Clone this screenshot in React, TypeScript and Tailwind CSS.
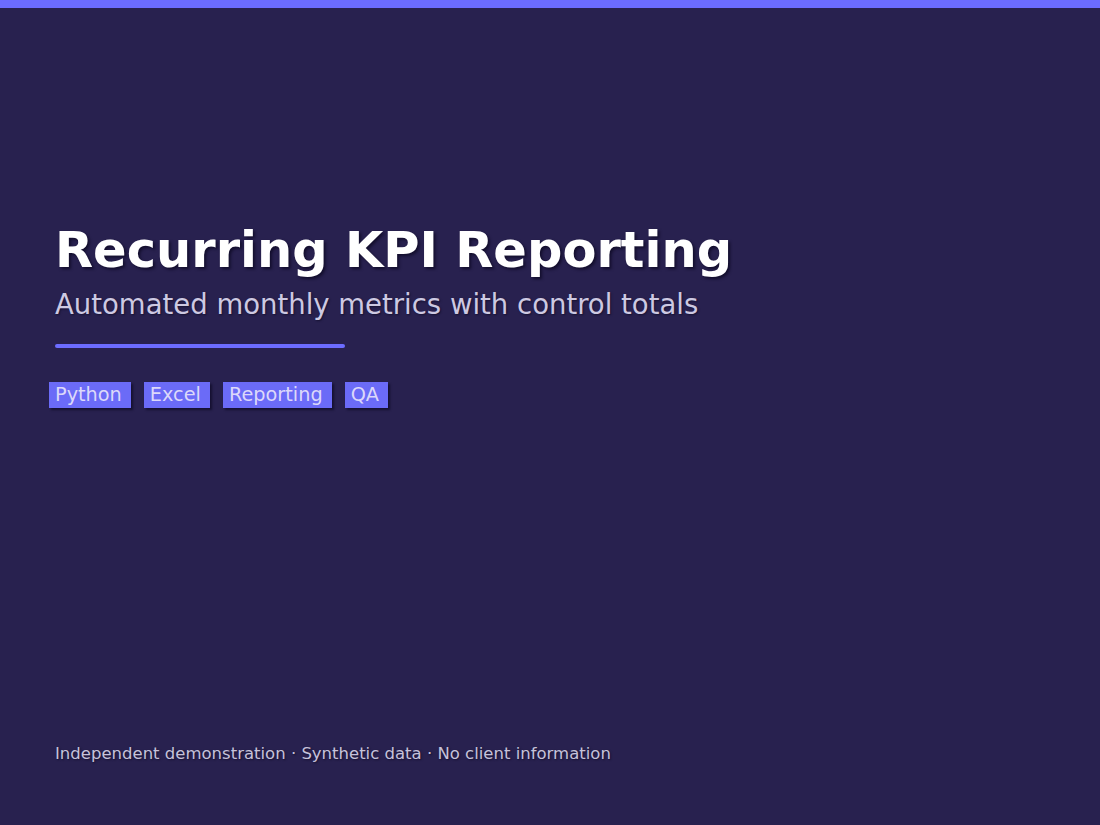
const tags = ["Python", "Excel", "Reporting", "QA"];

export default function App() {
  return (
    <div className="flex h-[825px] w-full flex-col bg-[#28214f] font-['DejaVu_Sans',sans-serif]">
      <div className="h-2 w-full bg-[#6c6cff]" />
      <div className="flex flex-1 flex-col pl-[55px]">
        <h1 className="mt-[213px] text-[49.5px] font-bold leading-[1.2] text-white [text-shadow:2px_2px_3px_rgba(10,6,30,0.7)]">
          Recurring KPI Reporting
        </h1>
        <p className="mt-[8px] text-[27.5px] leading-[1.2] text-[#cdc9e2] [text-shadow:1px_1px_2px_rgba(10,6,30,0.6)]">
          Automated monthly metrics with control totals
        </p>
        <div className="mt-[23px] h-1 w-[290px] rounded-full bg-[#6c6cff]" />
        <div className="-ml-[6px] mt-[34px] flex gap-[13px]">
          {tags.map((t) => (
            <span
              key={t}
              className="bg-[#6b6bf7] pl-[6px] pr-[9px] text-[19.3px] leading-[26px] text-[#dcd8fa] shadow-[2px_2px_2px_rgba(10,6,30,0.6)]"
            >
              {t}
            </span>
          ))}
        </div>
        <p className="mt-auto pb-[61px] text-[16.5px] leading-5 text-[#c6c2da] [text-shadow:1px_1px_2px_rgba(10,6,30,0.6)]">
          Independent demonstration · Synthetic data · No client information
        </p>
      </div>
    </div>
  );
}
